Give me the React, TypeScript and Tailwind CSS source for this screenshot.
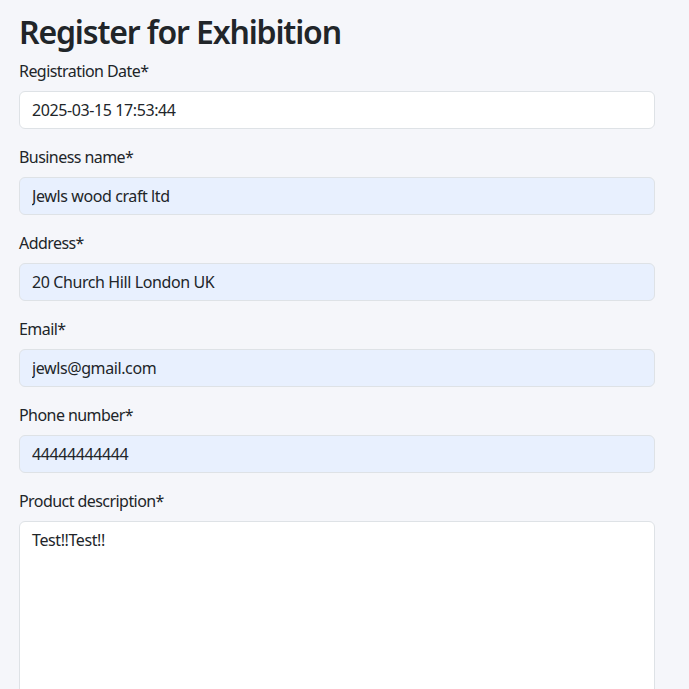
import React from "react";

const fields = [
  { label: "Registration Date*", value: "2025-03-15 17:53:44", filled: false },
  { label: "Business name*", value: "Jewls wood craft ltd", filled: true },
  { label: "Address*", value: "20 Church Hill London UK", filled: true },
  { label: "Email*", value: "jewls@gmail.com", filled: true },
  { label: "Phone number*", value: "44444444444", filled: true },
];

export default function App() {
  return (
    <div
      className="min-h-screen bg-[#f5f6fa] text-[#212529] px-[19px] pt-[13px]"
      style={{ fontFamily: '"Noto Sans", "Open Sans", sans-serif' }}
    >
      <div className="w-[636px]">
        <h2 className="text-[32px] leading-[1.2] font-semibold tracking-[-0.036em] mb-2">
          Register for Exhibition
        </h2>
        {fields.map((f) => (
          <div key={f.label} className="mb-4">
            <label className="block text-base leading-6 tracking-[-0.035em] mb-2">{f.label}</label>
            <input
              readOnly
              value={f.value}
              className={
                "block w-full h-[38px] px-3 text-base tracking-[-0.025em] border border-[#dee2e6] rounded-md outline-none " +
                (f.filled ? "bg-[#e8f0fe]" : "bg-white")
              }
            />
          </div>
        ))}
        <div className="mb-4">
          <label className="block text-base leading-6 tracking-[-0.035em] mb-2">Product description*</label>
          <textarea
            readOnly
            value="Test!!Test!!"
            className="block w-full h-[300px] px-3 py-[6px] text-base leading-6 tracking-[-0.025em] bg-white border border-[#dee2e6] rounded-md outline-none resize-none"
          />
        </div>
      </div>
    </div>
  );
}
